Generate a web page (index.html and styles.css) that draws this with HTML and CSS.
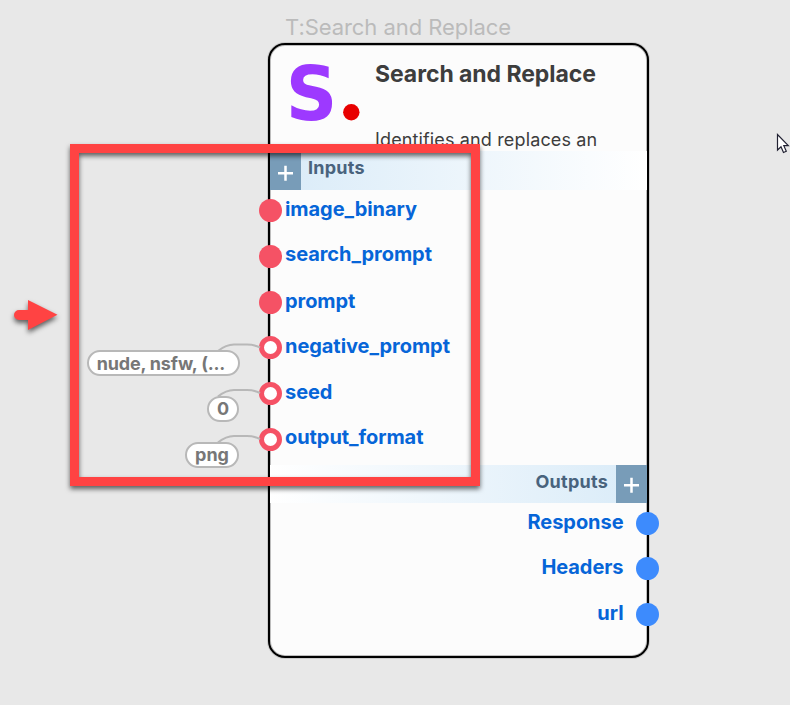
FILE: index.html
```html
<!DOCTYPE html>
<html lang="en">
<head>
<meta charset="utf-8">
<title>Search and Replace</title>
<link rel="stylesheet" href="styles.css">
</head>
<body>
<main class="canvas">
  <div class="node-caption">T:Search and Replace</div>
  <section class="node">
    <header class="node-header">
      <svg class="logo" viewBox="0 0 86 80" width="86" height="80">
        <text class="logo-letter" x="0" y="0" transform="translate(15.700 75) scale(.955 1)">S</text>
        <circle cx="81.3" cy="67.2" r="8.2" fill="#e80000"/>
      </svg>
      <div class="node-heading">
        <h1 class="node-title">Search and Replace</h1>
        <p class="node-desc">Identifies and replaces an</p>
      </div>
    </header>
    <div class="band band-in"><span class="add"><svg width="31" height="39"><path d="M8 22.200H23M15.500 14.700V29.700"/></svg></span><span class="band-label">Inputs</span></div>
    <ul class="ports">
      <li class="port"><i class="dot"></i><span>image_binary</span></li>
      <li class="port"><i class="dot"></i><span>search_prompt</span></li>
      <li class="port"><i class="dot"></i><span class="low">prompt</span></li>
      <li class="port"><i class="dot ring"></i><span>negative_prompt</span></li>
      <li class="port"><i class="dot ring"></i><span>seed</span></li>
      <li class="port"><i class="dot ring"></i><span>output_format</span></li>
    </ul>
    <div class="band band-out"><span class="band-label">Outputs</span><span class="add"><svg width="31" height="38"><path d="M8 20.200H23M15.500 12.700V27.700"/></svg></span></div>
    <ul class="ports ports-out">
      <li class="port"><span>Response</span><i class="dot"></i></li>
      <li class="port"><span>Headers</span><i class="dot"></i></li>
      <li class="port"><span>url</span><i class="dot"></i></li>
    </ul>
  </section>

  <svg class="wires" width="790" height="705">
    <path d="M218 351C223 347 227 344.500 234 344.500H247C253 344.500 257 346 260 347.500"/>
    <path d="M218 396.500C223 392.500 227 390 234 390H247C253 390 257 391.500 260 393"/>
    <path d="M218 442.500C223 438.500 227 436 234 436H247C253 436 257 437.500 260 439"/>
  </svg>
  <span class="value value-negative">nude, nsfw, (...</span>
  <span class="value value-seed">0</span>
  <span class="value value-format">png</span>

  <div class="callout"></div>
  <svg class="arrow" width="60" height="50" viewBox="0 0 60 50"><path d="M18 10L47.500 24.800L18 40V30H9A5 5 0 0 1 9 20H18Z"/></svg>
  <svg class="cursor" width="14" height="22" viewBox="0 0 14 22"><path d="M1.500 1.500V17L5 13.700L7.500 19.500L10.300 18.300L7.800 12.700H12.300Z"/></svg>
</main>
</body>
</html>
```

FILE: styles.css
```css
* { box-sizing: border-box; }
body { margin: 0; background: #e8e8e8; font-family: Inter, "Liberation Sans", sans-serif; }
.canvas { position: relative; width: 790px; height: 705px; overflow: hidden; }
.node-caption { position: absolute; left: 285px; top: 14px; font-size: 22px; line-height: 27px; letter-spacing: -.06px; color: #bbb; white-space: nowrap; }
.node { position: absolute; left: 268px; top: 43px; width: 381px; height: 615px; border: 2px solid #000; border-radius: 17px; background: #fcfcfc; box-shadow: 0 0 0 1px rgba(0,0,0,.12), inset 0 0 0 1px rgba(0,0,0,.25); }
.node-header { display: flex; height: 106px; overflow: hidden; }
.logo { flex: none; overflow: visible; }
.logo-letter { font: bold 75px "DejaVu Sans", sans-serif; fill: #9d39ff; }
.node-heading { padding: 16px 0 0 19px; color: #3d3d3d; white-space: nowrap; }
.node-title { margin: 0; font-size: 23px; line-height: 27px; font-weight: 700; letter-spacing: -.06px; }
.node-desc { margin: 40px 0 0; font-size: 18px; line-height: 24px; letter-spacing: .14px; }
.band { display: flex; }
.band-in { height: 39px; background: linear-gradient(90deg, #d9ebf8, #fff); }
.band-out { height: 38px; justify-content: flex-end; background: linear-gradient(90deg, #fff, #d9ebf8); }
.band-label { padding: 6px 7px; font-size: 18px; line-height: 22px; font-weight: 700; letter-spacing: .25px; color: #49637d; }
.band-out .band-label { padding-right: 8px; }
.add { width: 31px; background: #789cb8; }
.add svg { display: block; fill: none; stroke: #fff; stroke-width: 2.500; }
.ports { margin: 0; padding: 0; list-style: none; height: 275px; }
.port { display: flex; height: 45.750px; margin-left: -10.800px; padding-top: 8px; gap: 2.800px; font-size: 20px; line-height: 24px; font-weight: 700; letter-spacing: -.06px; color: #0665d8; }
.port span { margin-top: -1.400px; }
.port .low { margin-top: -.800px; }
.dot { flex: none; width: 23px; height: 23px; margin-top: 1px; border-radius: 50%; background: #f55265; }
.ring { border: 5px solid #f55265; background: #fff; }
.ports-out .port { margin: 0 -11.500px 0 0; justify-content: flex-end; gap: 12px; }
.ports-out .dot { margin-top: .700px; background: #3d8bfd; }
.wires { position: absolute; left: 0; top: 0; fill: none; stroke: #b8b8b8; stroke-width: 2.200; }
.value { position: absolute; height: 26px; border: 2px solid #b8b8b8; border-radius: 13px; background: #fff; color: #777; font-size: 18px; line-height: 22px; font-weight: 700; text-align: center; white-space: nowrap; }
.value-negative { left: 87px; top: 350px; width: 153px; padding-right: 5px; line-height: 23px; letter-spacing: -.2px; }
.value-seed { left: 207px; top: 396px; width: 32px; }
.value-format { left: 185px; top: 442px; width: 54px; }
.callout { position: absolute; left: 70px; top: 144px; width: 410px; height: 342px; border: 9px solid #ff4343; filter: drop-shadow(0 3px 2.500px rgba(0,0,0,.6)); }
.arrow { position: absolute; left: 10px; top: 290px; fill: #ff4343; filter: drop-shadow(0 3px 2.500px rgba(0,0,0,.6)); }
.cursor { position: absolute; left: 776px; top: 133px; fill: #fff; stroke: #223; stroke-width: 1.200; }
```
